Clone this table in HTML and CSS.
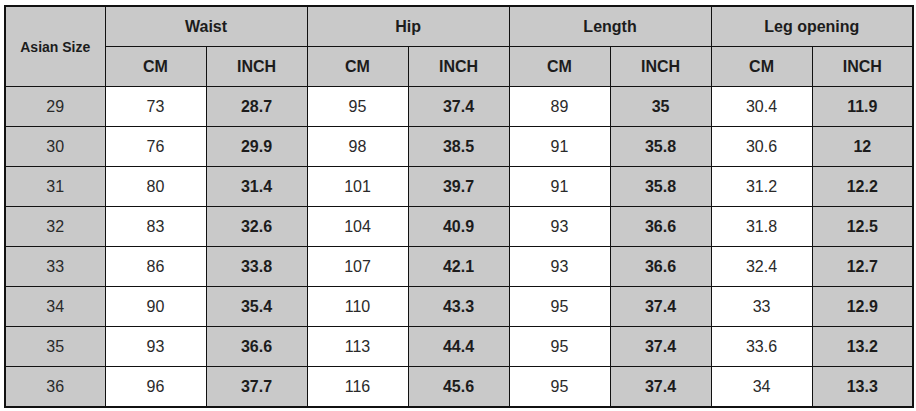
FILE: index.html
```html
<!DOCTYPE html>
<html>
<head>
<meta charset="utf-8">
<link rel="stylesheet" href="styles.css">
</head>
<body>
<table class="size-table">
  <colgroup>
    <col class="c-size">
    <col class="c-val"><col class="c-val">
    <col class="c-val"><col class="c-val">
    <col class="c-val"><col class="c-val">
    <col class="c-val"><col class="c-val">
  </colgroup>
  <thead>
    <tr>
      <th rowspan="2" class="size-head">Asian Size</th>
      <th colspan="2">Waist</th>
      <th colspan="2">Hip</th>
      <th colspan="2">Length</th>
      <th colspan="2">Leg opening</th>
    </tr>
    <tr>
      <th>CM</th><th>INCH</th>
      <th>CM</th><th>INCH</th>
      <th>CM</th><th>INCH</th>
      <th>CM</th><th>INCH</th>
    </tr>
  </thead>
  <tbody>
    <tr><td class="size">29</td><td>73</td><td class="inch">28.7</td><td>95</td><td class="inch">37.4</td><td>89</td><td class="inch">35</td><td>30.4</td><td class="inch">11.9</td></tr>
    <tr><td class="size">30</td><td>76</td><td class="inch">29.9</td><td>98</td><td class="inch">38.5</td><td>91</td><td class="inch">35.8</td><td>30.6</td><td class="inch">12</td></tr>
    <tr><td class="size">31</td><td>80</td><td class="inch">31.4</td><td>101</td><td class="inch">39.7</td><td>91</td><td class="inch">35.8</td><td>31.2</td><td class="inch">12.2</td></tr>
    <tr><td class="size">32</td><td>83</td><td class="inch">32.6</td><td>104</td><td class="inch">40.9</td><td>93</td><td class="inch">36.6</td><td>31.8</td><td class="inch">12.5</td></tr>
    <tr><td class="size">33</td><td>86</td><td class="inch">33.8</td><td>107</td><td class="inch">42.1</td><td>93</td><td class="inch">36.6</td><td>32.4</td><td class="inch">12.7</td></tr>
    <tr><td class="size">34</td><td>90</td><td class="inch">35.4</td><td>110</td><td class="inch">43.3</td><td>95</td><td class="inch">37.4</td><td>33</td><td class="inch">12.9</td></tr>
    <tr><td class="size">35</td><td>93</td><td class="inch">36.6</td><td>113</td><td class="inch">44.4</td><td>95</td><td class="inch">37.4</td><td>33.6</td><td class="inch">13.2</td></tr>
    <tr><td class="size">36</td><td>96</td><td class="inch">37.7</td><td>116</td><td class="inch">45.6</td><td>95</td><td class="inch">37.4</td><td>34</td><td class="inch">13.3</td></tr>
  </tbody>
</table>
</body>
</html>
```

FILE: styles.css
```css
html, body {
  margin: 0;
  padding: 0;
  background: #ffffff;
}
body {
  padding: 5px 0 0 4px;
  font-family: "Liberation Sans", Arial, sans-serif;
}
.size-table {
  border-collapse: collapse;
  table-layout: fixed;
  width: 910px;
  border: 2px solid #111;
}
.c-size { width: 100px; }
.c-val { width: 101px; }
.size-table th,
.size-table td {
  border: 1px solid #111;
  height: 39px;
  padding: 0;
  text-align: center;
  vertical-align: middle;
  font-size: 16px;
  color: #1c1c1c;
}
.size-table th {
  background: #c9c9c9;
  font-weight: bold;
}
.size-table th.size-head {
  font-size: 14px;
}
.size-table td {
  background: #ffffff;
  font-weight: normal;
  color: #2a2a2a;
}
.size-table td.size {
  background: #c9c9c9;
}
.size-table td.inch {
  background: #c9c9c9;
  font-weight: bold;
  color: #1c1c1c;
}
```
